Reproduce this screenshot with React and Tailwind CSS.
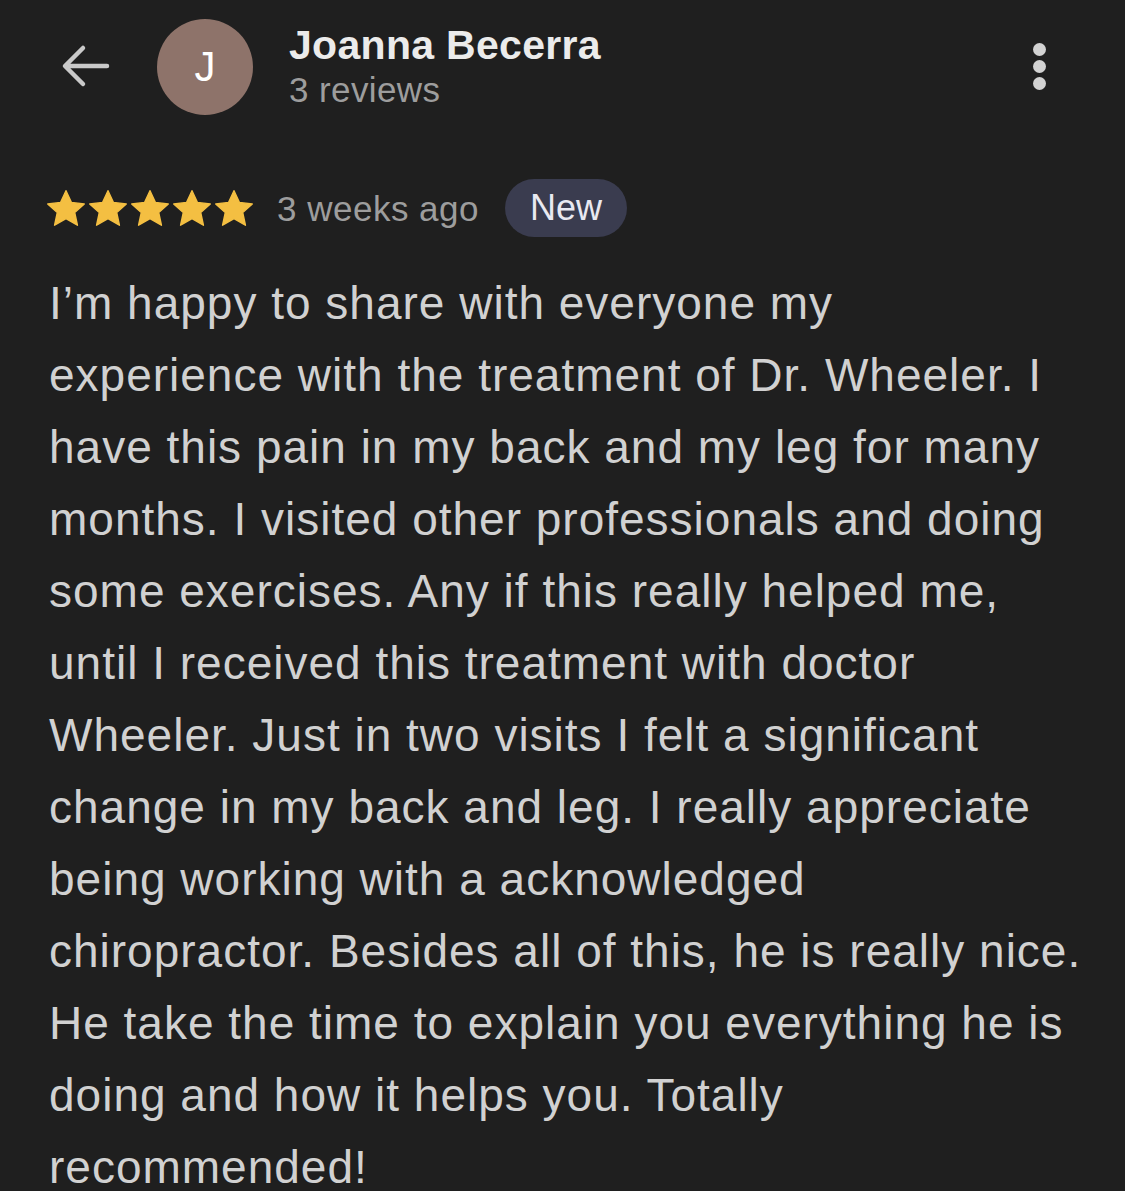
import React from "react";

const lines = [
  "I’m happy to share with everyone my",
  "experience with the treatment of Dr. Wheeler. I",
  "have this pain in my back and my leg for many",
  "months. I visited other professionals and doing",
  "some exercises. Any if this really helped me,",
  "until I received this treatment with doctor",
  "Wheeler. Just in two visits I felt a significant",
  "change in my back and leg. I really appreciate",
  "being working with a acknowledged",
  "chiropractor. Besides all of this, he is really nice.",
  "He take the time to explain you everything he is",
  "doing and how it helps you. Totally",
  "recommended!",
];

function Star() {
  return (
    <svg width="38" height="36" viewBox="1.4 1.4 21.2 20.1" className="block">
      <path
        d="M12 1.8l3.05 6.55 7.15.8-5.33 4.85 1.5 7.05L12 17.45 5.63 21.05l1.5-7.05L1.8 9.15l7.15-.8z"
        fill="#f4bf42"
        stroke="#f4bf42"
        strokeWidth="0.8"
        strokeLinejoin="round"
      />
    </svg>
  );
}

export default function App() {
  return (
    <div
      className="w-[1125px] h-[1191px] overflow-hidden bg-[#1f1f1f]"
      style={{ fontFamily: '"Liberation Sans", Arial, sans-serif' }}
    >
      {/* Header */}
      <div className="relative flex items-center h-[134px]">
        <div className="ml-[58px] w-[52px] h-[52px] flex items-center justify-center">
          <svg width="52" height="52" viewBox="0 0 52 52">
            <path
              d="M49 25H8M25 7L7 25l18 18"
              fill="none"
              stroke="#c9c9c9"
              strokeWidth="4.5"
              strokeLinecap="round"
              strokeLinejoin="round"
            />
          </svg>
        </div>
        <div className="ml-[47px] w-[96px] h-[96px] rounded-full bg-[#8e736a] flex items-center justify-center text-white text-[42px] leading-none">
          J
        </div>
        <div className="ml-[36px] flex flex-col -mt-[2px]">
          <div className="text-[41px] font-bold text-[#ebebeb] leading-[48px] tracking-[0.3px]">
            Joanna Becerra
          </div>
          <div className="text-[35px] text-[#9d9d9d] leading-[42px] tracking-[0.4px]">3 reviews</div>
        </div>
        <div className="absolute left-[1033px] top-[43px] flex flex-col gap-[4px]">
          <div className="w-[13px] h-[13px] rounded-full bg-[#d2d2d2]" />
          <div className="w-[13px] h-[13px] rounded-full bg-[#d2d2d2]" />
          <div className="w-[13px] h-[13px] rounded-full bg-[#d2d2d2]" />
        </div>
      </div>

      {/* Rating row */}
      <div className="flex items-center mt-[45px] ml-[47px] h-[58px]">
        <div className="flex gap-[4px]">
          <Star />
          <Star />
          <Star />
          <Star />
          <Star />
        </div>
        <div className="ml-[24px] text-[35px] text-[#9d9d9d] leading-none tracking-[0.5px]">3 weeks ago</div>
        <div className="ml-[26px] h-[58px] w-[122px] rounded-full bg-[#3a3c4f] flex items-center justify-center text-[36px] text-[#e9e9f1] leading-none">
          New
        </div>
      </div>

      {/* Body */}
      <div className="mt-[30px] ml-[49px] text-[46px] leading-[72px] text-[#d1d1d1] tracking-[1px]">
        {lines.map((l, i) => (
          <div key={i} className="whitespace-nowrap">
            {l}
          </div>
        ))}
      </div>
    </div>
  );
}
